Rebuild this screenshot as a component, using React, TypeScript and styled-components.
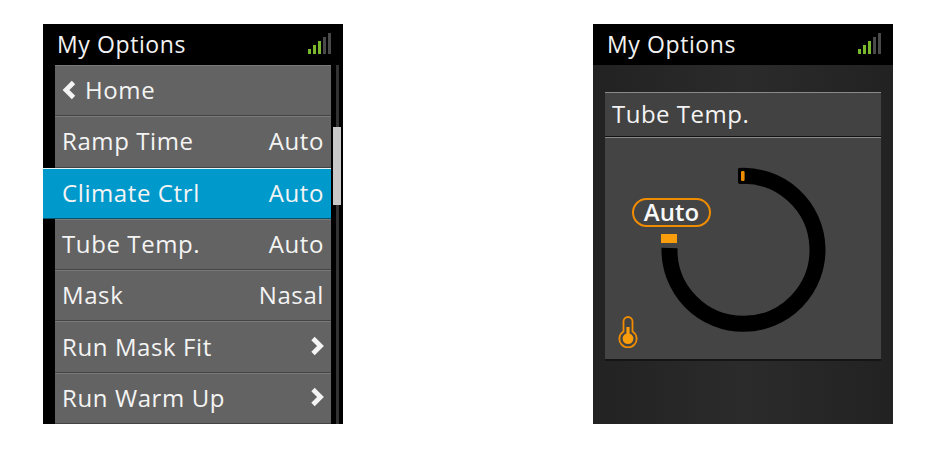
import React from "react";
import styled, { createGlobalStyle } from "styled-components";

const GlobalStyle = createGlobalStyle`
  html, body {
    margin: 0;
    padding: 0;
    background: #fff;
    font-family: "Open Sans", "DejaVu Sans", sans-serif;
  }
`;

const Page = styled.div`
  display: flex;
  gap: 250px;
  width: 944px;
  height: 458px;
  box-sizing: border-box;
  padding: 24px 0 0 43px;
  overflow: hidden;
`;

const Screen = styled.div`
  display: flex;
  flex-direction: column;
  width: 300px;
  height: 400px;
  background: #000;
`;

const DarkScreen = styled(Screen)`
  background: linear-gradient(90deg, #222 0%, #2b2b2b 50%, #222 100%);
`;

const Header = styled.div`
  display: flex;
  flex: none;
  align-items: center;
  justify-content: space-between;
  height: 41px;
  padding: 0 12px 2px 14px;
  box-sizing: border-box;
  background: #000;
  color: #f2f2f2;
  font-size: 23px;
  font-weight: 500;
  letter-spacing: 0.6px;
`;

const ListArea = styled.div`
  display: flex;
  flex: 1;
  min-height: 0;
`;

const List = styled.div`
  display: flex;
  flex-direction: column;
  width: 288px;
`;

const Row = styled.div<{ $active?: boolean }>`
  display: flex;
  flex: none;
  align-items: center;
  justify-content: space-between;
  box-sizing: border-box;
  height: 51.3px;
  margin-left: ${(p) => (p.$active ? "0" : "12px")};
  padding: 0 7px 2px ${(p) => (p.$active ? "19px" : "7px")};
  background: ${(p) => (p.$active ? "#0099cc" : "#636363")};
  border-top: 1px solid ${(p) => (p.$active ? "#e8f4f8" : "#7a7a7a")};
  border-bottom: 1px solid ${(p) => (p.$active ? "#06536e" : "#444")};
  color: #f4f4f4;
  font-size: 24px;
  font-weight: 500;
  letter-spacing: 0.6px;
`;

const HomeLabel = styled.span`
  display: flex;
  align-items: center;
  gap: 7px;
`;

const ScrollTrack = styled.div`
  position: relative;
  width: 3px;
  margin-left: 5px;
  height: 100%;
  background: #333;
`;

const ScrollThumb = styled.div`
  position: absolute;
  top: 62px;
  left: -3px;
  width: 8px;
  height: 78px;
  background: #c8c8c8;
`;

const Panel = styled.div`
  display: flex;
  flex-direction: column;
  width: 276px;
  margin: 27px 0 0 12px;
`;

const PanelTitle = styled.div`
  display: flex;
  align-items: center;
  box-sizing: border-box;
  height: 45px;
  padding: 0 0 2px 7px;
  background: #424242;
  border-top: 1px solid #8a8a8a;
  border-bottom: 1px solid #111;
  color: #f4f4f4;
  font-size: 24px;
  font-weight: 500;
  letter-spacing: 0.5px;
`;

const DialBody = styled.div`
  position: relative;
  box-sizing: border-box;
  height: 224px;
  background: #444;
  border-top: 1px solid #8a8a8a;
  border-bottom: 2px solid #151515;
`;

const DialValue = styled.div`
  position: absolute;
  left: 27px;
  top: 60px;
  display: flex;
  align-items: center;
  justify-content: center;
  box-sizing: border-box;
  width: 79px;
  height: 29px;
  padding-bottom: 2px;
  border: 2.5px solid #f08c00;
  border-radius: 15px;
  color: #f8f8f8;
  font-size: 24px;
  font-weight: 600;
`;

const Marker = styled.div`
  position: absolute;
  left: 56px;
  top: 96px;
  width: 16px;
  height: 9px;
  background: #f99d0c;
`;

const DialSvg = styled.svg`
  position: absolute;
  left: 0;
  top: 0;
`;

const ThermoSvg = styled.svg`
  position: absolute;
  left: 13px;
  top: 178px;
`;

function Signal() {
  const bars = [
    { x: 0, h: 5, c: "#7ab82e" },
    { x: 5, h: 9, c: "#7ab82e" },
    { x: 10, h: 13, c: "#7ab82e" },
    { x: 15, h: 17, c: "#4a4a4a" },
    { x: 20, h: 21, c: "#4a4a4a" },
  ];
  return (
    <svg width="23" height="21" viewBox="0 0 23 21">
      {bars.map((b) => (
        <rect key={b.x} x={b.x} y={21 - b.h} width="3" height={b.h} fill={b.c} />
      ))}
    </svg>
  );
}

function Chevron({ left }: { left?: boolean }) {
  return (
    <svg width="16" height="20" viewBox="0 0 16 20">
      <path
        d={left ? "M11.5 2.5 L4 10 L11.5 17.5" : "M5 2.5 L12.5 10 L5 17.5"}
        fill="none"
        stroke="#f4f4f4"
        strokeWidth="4.8"
      />
    </svg>
  );
}

function Menu() {
  return (
    <Screen>
      <Header>
        My Options
        <Signal />
      </Header>
      <ListArea>
        <List>
          <Row>
            <HomeLabel>
              <Chevron left />
              Home
            </HomeLabel>
          </Row>
          <Row>
            <span>Ramp Time</span>
            <span>Auto</span>
          </Row>
          <Row $active>
            <span>Climate Ctrl</span>
            <span>Auto</span>
          </Row>
          <Row>
            <span>Tube Temp.</span>
            <span>Auto</span>
          </Row>
          <Row>
            <span>Mask</span>
            <span>Nasal</span>
          </Row>
          <Row>
            <span>Run Mask Fit</span>
            <Chevron />
          </Row>
          <Row>
            <span>Run Warm Up</span>
            <Chevron />
          </Row>
        </List>
        <ScrollTrack>
          <ScrollThumb />
        </ScrollTrack>
      </ListArea>
    </Screen>
  );
}

function TubeTemp() {
  return (
    <DarkScreen>
      <Header>
        My Options
        <Signal />
      </Header>
      <Panel>
        <PanelTitle>Tube Temp.</PanelTitle>
        <DialBody>
          <DialSvg width="276" height="222" viewBox="0 0 276 222">
            {/* ring runs clockwise from the top round to the left side */}
            <path
              d="M134 38 A 74 74 0 1 1 64.5 110"
              fill="none"
              stroke="#000"
              strokeWidth="16"
            />
            <rect x="133" y="30" width="8" height="16" rx="2" fill="#000" />
            <rect x="136" y="33" width="3.6" height="10" rx="1.2" fill="#f08c00" />
          </DialSvg>
          <DialValue>Auto</DialValue>
          <Marker />
          <ThermoSvg width="20" height="32" viewBox="0 0 20 32">
            <path
              d="M5.5 15.5 V5.5 a4.5 4.5 0 0 1 9 0 V15.5 A 8.6 8.6 0 1 1 5.5 15.5 Z"
              fill="none"
              stroke="#f08c00"
              strokeWidth="1.8"
            />
            <rect x="8.4" y="11" width="3.2" height="9" fill="#f99d0c" />
            <circle cx="10" cy="22.6" r="5.4" fill="#f99d0c" />
          </ThermoSvg>
        </DialBody>
      </Panel>
    </DarkScreen>
  );
}

export default function App() {
  return (
    <>
      <GlobalStyle />
      <Page>
        <Menu />
        <TubeTemp />
      </Page>
    </>
  );
}
